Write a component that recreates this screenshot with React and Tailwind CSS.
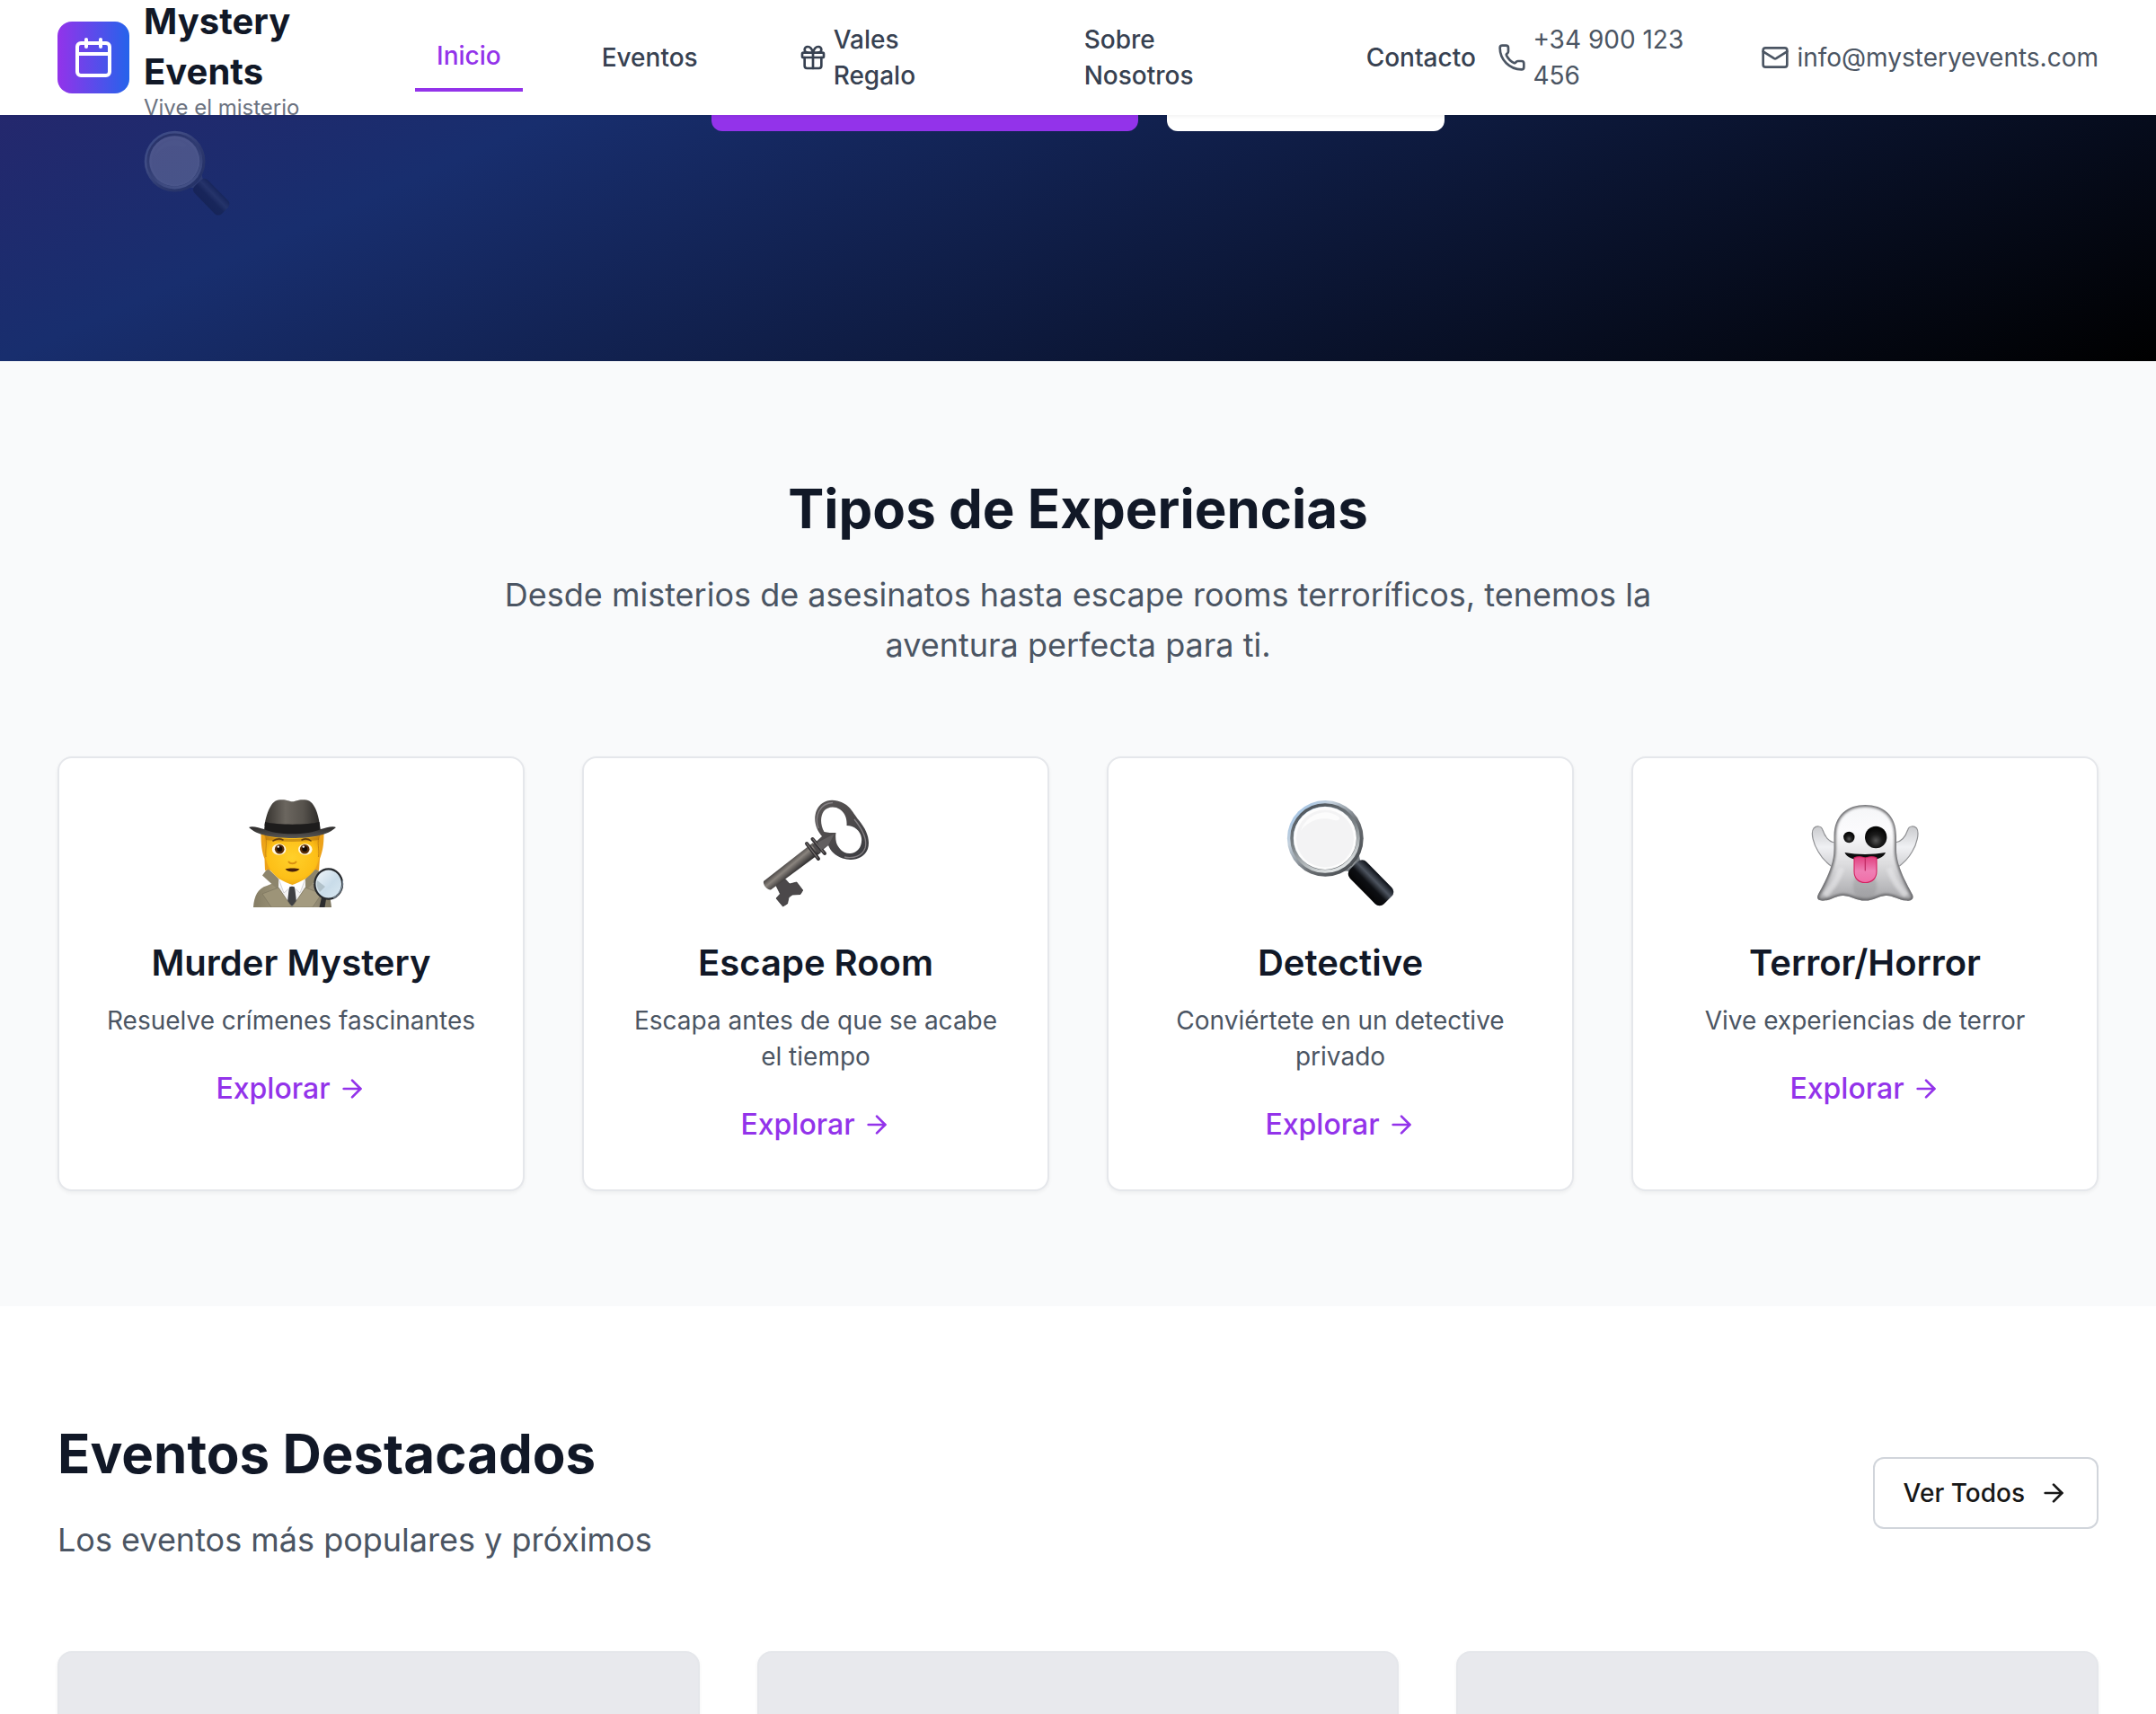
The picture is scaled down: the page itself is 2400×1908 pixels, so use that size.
import React from "react";
import { ArrowRight, Calendar, Gift, Mail, Phone } from "lucide-react";

function MagnifierArt({ className, id }) {
  return (
    <svg viewBox="0 0 120 120" className={className} aria-hidden="true">
      <defs>
        <linearGradient id={id + "rim"} x1="0" y1="0" x2="1" y2="1">
          <stop offset="0" stopColor="#8fbdec" />
          <stop offset="0.3" stopColor="#c3d0dc" />
          <stop offset="0.6" stopColor="#6b6f73" />
          <stop offset="1" stopColor="#3c4146" />
        </linearGradient>
        <linearGradient id={id + "edge"} x1="0.2" y1="0" x2="0.6" y2="1">
          <stop offset="0" stopColor="#4b5258" />
          <stop offset="0.5" stopColor="#7d8488" />
          <stop offset="1" stopColor="#dfe3e4" />
        </linearGradient>
        <linearGradient id={id + "grip"} x1="0" y1="0" x2="0" y2="1">
          <stop offset="0" stopColor="#0b0f16" />
          <stop offset="0.32" stopColor="#4d545f" />
          <stop offset="0.6" stopColor="#0d0f13" />
          <stop offset="1" stopColor="#050506" />
        </linearGradient>
      </defs>
      <path d="M62 80 C72 77 78 70 81 60 C81 65 82 68 84 71 L74 82 C71 80 67 79 62 80 Z" fill="#777d82" />
      <circle cx="43.3" cy="43.3" r="42.4" fill={"url(#" + id + "rim)"} />
      <circle cx="43" cy="43" r="37" fill="none" stroke={"url(#" + id + "edge)"} strokeWidth="3.5" />
      <circle cx="43" cy="43" r="35" fill="#fdfdfd" />
      <circle cx="43" cy="43.5" r="32" fill="#f3f3f4" />
      <path d="M16 35 C21 17 43 8 58 19 C61 22 58 24 53 23 C37 18 23 25 16 35 Z" fill="#ffffff" opacity="0.7" />
      <rect x="67" y="79.8" width="54" height="26" rx="7" transform="rotate(45.5 94 92.8)" fill={"url(#" + id + "grip)"} />
    </svg>
  );
}

function DetectiveArt({ className }) {
  return (
    <svg viewBox="0 0 120 120" className={className} aria-hidden="true">
      <defs>
        <linearGradient id="crown" x1="0" y1="0" x2="1" y2="0">
          <stop offset="0" stopColor="#35322e" />
          <stop offset="0.38" stopColor="#6b665f" />
          <stop offset="0.7" stopColor="#57534d" />
          <stop offset="1" stopColor="#2c2a28" />
        </linearGradient>
        <linearGradient id="brim" x1="0" y1="0" x2="0" y2="1">
          <stop offset="0" stopColor="#2b2a2a" />
          <stop offset="1" stopColor="#5a5855" />
        </linearGradient>
        <radialGradient id="skin" cx="0.5" cy="0.45" r="0.62">
          <stop offset="0" stopColor="#ffd02a" />
          <stop offset="0.7" stopColor="#fdbf17" />
          <stop offset="1" stopColor="#e69c10" />
        </radialGradient>
        <linearGradient id="coat" x1="0" y1="0" x2="1" y2="0">
          <stop offset="0" stopColor="#857d64" />
          <stop offset="0.4" stopColor="#a39a7e" />
          <stop offset="0.75" stopColor="#99907a" />
          <stop offset="1" stopColor="#7d765f" />
        </linearGradient>
        <linearGradient id="lens" x1="0" y1="0" x2="1" y2="1">
          <stop offset="0" stopColor="#f2f7fb" />
          <stop offset="0.55" stopColor="#c9dce9" />
          <stop offset="1" stopColor="#dceaf3" />
        </linearGradient>
      </defs>
      <path d="M18 120 C19 107 23 99 33 96 L45 91 L77 91 L92 96 C101 99 104 108 105 120 Z" fill="url(#coat)" />
      <path d="M34 76.5 L28 84.5 L46 101 L48 90 Z" fill="#8d856c" />
      <path d="M88 76.5 L95 84.5 L76 101 L74 90 Z" fill="#8d856c" />
      <path d="M46 88 L76 88 L76 98 L61 120 L46 98 Z" fill="#f3f3f4" />
      <path d="M46 88 L52 104 L61 96 L70 104 L76 88 Z" fill="#ffffff" stroke="#c7c7ca" strokeWidth="0.8" />
      <path d="M58.5 97 L63.5 97 L64.5 101 L66 114 L61 119 L56 114 L57.5 101 Z" fill="#3f4043" />
      <path d="M46 98 L28 105 L38 120 L61 120 Z" fill="#9d9478" stroke="#7d765f" strokeWidth="0.7" />
      <path d="M76 98 L94 105 L84 120 L61 120 Z" fill="#a49b80" stroke="#7d765f" strokeWidth="0.7" />
      <path d="M26.500 38 L96.500 38 C96.500 51 95 58 92 66 L91 79 L87 78 L83 80 L39 80 L35 78 L31 79 L30.500 66 C27.500 58 26.500 50 26.500 38 Z" fill="#eda21a" />
      <path d="M30.500 40 L92 40 C93 57 92 68 87 77 C81 87 70 92 61.500 95 C52 92 42 87 36 77 C31 68 29.500 57 30.500 40 Z" fill="url(#skin)" />
      <path d="M31 40 C34 48 31 54 32 64 M92 40 C88 48 92 54 90.500 64" fill="none" stroke="#c9850f" strokeWidth="1" />
      <path d="M32 41 C48 45 75 45 91 41 L91 45 C74 47.500 48 47.500 32 45 Z" fill="#a66a0b" opacity="0.5" />
      <path d="M40 46 C44 43.500 48 43.500 51 45 M72 45 C75 43.500 79 43.500 82 46" fill="none" stroke="#67400c" strokeWidth="1.600" strokeLinecap="round" />
      <ellipse cx="46.600" cy="55.500" rx="7.800" ry="6.200" fill="#fff8e1" />
      <ellipse cx="75.800" cy="55.500" rx="7.800" ry="6.200" fill="#fff8e1" />
      <circle cx="47.200" cy="55.300" r="5.300" fill="#5b2f08" />
      <circle cx="75.200" cy="55.300" r="5.300" fill="#5b2f08" />
      <circle cx="47.200" cy="55" r="3" fill="#140b04" />
      <circle cx="75.200" cy="55" r="3" fill="#140b04" />
      <circle cx="45.800" cy="52.600" r="1.200" fill="#ffffff" />
      <circle cx="73.800" cy="52.600" r="1.200" fill="#ffffff" />
      <path d="M57.500 69.500 C59 71.800 64 71.800 65.500 69.500" fill="none" stroke="#d98f10" strokeWidth="2" strokeLinecap="round" />
      <path d="M53.500 77.500 C58 76.300 65 76.300 69.500 77.500 C66 81.500 57 81.500 53.500 77.500 Z" fill="#47200b" />
      <path d="M30.500 29 C31.500 21 34 13 37 8 C40 2 44 0.300 50 0.300 C56 0.300 58 2.300 61.500 2.300 C65 2.300 67 0.300 73 0.300 C79 0.300 83 2 86 8 C89 13 91 21 92 29 C82 36 42 36 30.500 29 Z" fill="url(#crown)" />
      <path d="M31 25 C44 28.500 79 28.500 91.500 25 L93 35 C80 41 43 41 30 35 Z" fill="#1d1c1c" />
      <path d="M13 31 C17 29 25 32 30 33 C43 40 79 40 93 33 C98 32 106 29 110 31 C101 40 82 43 61.500 43 C41 43 22 40 13 31 Z" fill="url(#brim)" />
      <path d="M94 109 L99 111 L97.500 120 L91.500 120 Z" fill="#2b2c2e" />
      <ellipse cx="101.700" cy="94" rx="15.400" ry="16.600" fill="url(#lens)" stroke="#26292d" strokeWidth="2.200" />
      <path d="M89 90 L98 97 L92 103 C89 99 88 95 89 90 Z" fill="#a9b9c0" opacity="0.8" />
      <path d="M107 110 C115 105 118 98 117.500 90" fill="none" stroke="#7d8d9b" strokeWidth="1.200" />
    </svg>
  );
}

function KeyArt({ className }) {
  return (
    <svg viewBox="0 0 120 120" className={className} aria-hidden="true">
      <defs>
        <linearGradient id="iron" x1="0" y1="0" x2="1" y2="1">
          <stop offset="0" stopColor="#5b5858" />
          <stop offset="0.5" stopColor="#4d4a4b" />
          <stop offset="1" stopColor="#383a40" />
        </linearGradient>
        <linearGradient id="shaft" gradientUnits="userSpaceOnUse" x1="28" y1="68" x2="38" y2="80">
          <stop offset="0" stopColor="#3d3a3a" />
          <stop offset="0.45" stopColor="#8a847e" />
          <stop offset="1" stopColor="#353334" />
        </linearGradient>
      </defs>
      <path d="M15.5 95 L26 88.5 L31 94 L38.8 92 L45.7 101 L43 105.5 L34 106 L30 109 L28.5 116 L23.5 119 L16 110 L20.5 105 Z" fill="#4b484a" stroke="#343234" strokeWidth="0.8" />
      <path d="M57 48 L66 59 L10 100.5 C6 101 1 95 2 91 Z" fill="url(#shaft)" />
      <path fillRule="evenodd" d="M67 41 C60 33 57 22 61 12 C65 3 74 -1 84 1.5 C98 5 100 13 108 23 C117 34 121 45 118 55 C114 66 101 69 90 65.5 C81 62 77 58 74 51 L63 60 L56 51 Z M69.5 36 C65 28 65 19 69 13 C73 8 81 7 87 11 C93 15 95 22 94.5 29 C103 29 110 35 111 43 C112 52 107 59 99 60 C91 61 85 54 83 48 C82 44 82 40 82.5 37 C78 37 73 37 69.5 36 Z" fill="url(#iron)" />
      <path d="M63 32 C58 18 65 4 79 3.5 M103 22 C111 32 118 44 115 54 C112 63 102 66 92 64" fill="none" stroke="#858184" strokeWidth="1.3" />
      <path d="M50 49 L63 66 M56.5 44 L70 60" stroke="#343134" strokeWidth="4" strokeLinecap="round" />
      <path d="M50 49 L62 65 M57 44 L69 59" stroke="#7c7774" strokeWidth="1.2" strokeLinecap="round" />
      <path d="M62 48 L81 38 L74 51 L66 56 Z" fill="#625f60" />
    </svg>
  );
}

function GhostArt({ className }) {
  return (
    <svg viewBox="0 0 120 120" className={className} aria-hidden="true">
      <defs>
        <linearGradient id="sheet" x1="0" y1="0" x2="0" y2="1">
          <stop offset="0" stopColor="#f4f5f7" />
          <stop offset="0.3" stopColor="#fbfbfd" />
          <stop offset="0.6" stopColor="#dcdcde" />
          <stop offset="0.85" stopColor="#b4b4b7" />
          <stop offset="1" stopColor="#a2a2a4" />
        </linearGradient>
        <linearGradient id="arm" x1="0" y1="0" x2="0" y2="1">
          <stop offset="0" stopColor="#c9cacd" />
          <stop offset="0.5" stopColor="#f0f1f4" />
          <stop offset="1" stopColor="#cfcfd2" />
        </linearGradient>
        <radialGradient id="pupil" cx="0.5" cy="0.65" r="0.55">
          <stop offset="0" stopColor="#555555" />
          <stop offset="0.5" stopColor="#1c1c1c" />
          <stop offset="1" stopColor="#060606" />
        </radialGradient>
        <linearGradient id="tongue" x1="0" y1="0" x2="0" y2="1">
          <stop offset="0" stopColor="#e0407f" />
          <stop offset="0.55" stopColor="#ef7fb4" />
          <stop offset="1" stopColor="#f06fa8" />
        </linearGradient>
        <filter id="soft" x="-10%" y="-10%" width="120%" height="120%">
          <feGaussianBlur stdDeviation="1.6" />
        </filter>
        <clipPath id="bodyClip">
          <path d="M25.5 41 C25.5 17 41 6 60.3 6 C80 6 95 17 95 41 L95 56 C95 75 108 96 113 106 C115 111 111 113 106 112.6 C97 112 91 106.5 83 107 C75 107.500 70 112.600 60.300 112.600 C50 112.600 45 107.500 36 107 C29 106.500 23 112 14.500 112.600 C9 113 5.500 111 7.800 106 C13 96 25.500 75 25.500 56 Z" />
        </clipPath>
      </defs>
      <path d="M27 48 C19 47 15 40 13 34 C11.500 29 6 29 3 32 C-1 37 3 50 8 58 C13 67 19 72 25 76 Z" fill="url(#arm)" stroke="#909194" strokeWidth="1.2" />
      <path d="M93.600 48 C101.600 47 105.600 40 107.600 34 C109 29 114.600 29 117.600 32 C121 37 117.600 50 112.600 58 C107.600 67 101.600 72 95.600 76 Z" fill="url(#arm)" stroke="#909194" strokeWidth="1.2" />
      <g clipPath="url(#bodyClip)">
        <rect width="120" height="120" fill="url(#sheet)" />
        <ellipse cx="60" cy="96" rx="13" ry="17" fill="#8d8d90" opacity="0.35" filter="url(#soft)" />
        <path d="M34 76 C30 90 22 99 15 107 M87 76 C91 90 99 99 106 107" fill="none" stroke="#e6e6e8" strokeWidth="7" opacity="0.65" filter="url(#soft)" />
        <path d="M25.500 41 C25.500 17 41 6 60.300 6 C80 6 95 17 95 41 L95 56 C95 75 108 96 113 106 C115 111 111 113 106 112.600 C97 112 91 106.500 83 107 C75 107.500 70 112.600 60.300 112.600 C50 112.600 45 107.500 36 107 C29 106.500 23 112 14.500 112.600 C9 113 5.500 111 7.800 106 C13 96 25.500 75 25.500 56 Z" fill="none" stroke="#626265" strokeWidth="4" filter="url(#soft)" />
      </g>
      <circle cx="42.300" cy="42" r="6.200" fill="url(#pupil)" />
      <circle cx="72.200" cy="42" r="12.200" fill="url(#pupil)" />
      <path d="M37.500 59 C51 61.500 69 61.500 83 59 C81 64.500 73 68 60.300 68 C48 68 39.500 64.500 37.500 59 Z" fill="#0d0d0e" />
      <path d="M48 65 C51 63 57 63.500 60.300 65 C64 63.500 70 63 73 65 L73 80 C73 88 67.500 92.500 60.300 92.500 C53 92.500 48 88 48 80 Z" fill="url(#tongue)" stroke="#d3205f" strokeWidth="1.100" />
      <path d="M60.300 66 L60.300 79" stroke="#bf2a62" strokeWidth="1.200" strokeLinecap="round" />
    </svg>
  );
}

function Header() {
  return (
    <header className="relative z-10 flex h-32 shrink-0 items-center bg-white px-16 shadow-[0_2px_4px_0_rgba(0,0,0,0.05)]">
      <a className="flex w-[398px] shrink-0 items-center gap-4">
        <div className="flex size-20 shrink-0 items-center justify-center rounded-2xl bg-[linear-gradient(to_right,#9333ea,#2563eb)]">
          <Calendar className="size-12 text-white" />
        </div>
        <div className="-mb-1 w-[180px]">
          <div className="text-[40px] leading-[56px] font-bold text-[#111827]">Mystery Events</div>
          <div className="-mt-1 text-2xl leading-8 whitespace-nowrap text-[#6b7280]">Vive el misterio</div>
        </div>
      </a>
      <nav className="flex shrink-0 items-center gap-16 text-[28px] leading-10 font-medium text-[#374151]">
        <a className="border-b-4 border-[#9333ea] px-6 py-4 text-[#9333ea]">Inicio</a>
        <a className="px-6 py-4">Eventos</a>
        <a className="flex w-[254px] items-center gap-[7px] px-6 py-4">
          <Gift className="size-8 shrink-0" />
          <span>
            Vales
            <br />
            Regalo
          </span>
        </a>
        <a className="w-[250px] px-6 py-4">
          Sobre
          <br />
          Nosotros
        </a>
        <a className="px-6 py-4">Contacto</a>
      </nav>
      <div className="ml-auto flex shrink-0 items-center gap-12 text-[28px] leading-10 text-[#4b5563]">
        <div className="flex items-center gap-[7px]">
          <Phone className="size-8 shrink-0" />
          <span className="w-[206px]">
            +34 900 123
            <br />
            456
          </span>
        </div>
        <div className="flex items-center gap-2">
          <Mail className="size-8 shrink-0" />
          <span>info@mysteryevents.com</span>
        </div>
      </div>
    </header>
  );
}

function Hero() {
  return (
    <section className="flex h-[274px] shrink-0 flex-col justify-end overflow-hidden">
      <div className="relative flex h-[1064px] shrink-0 flex-col justify-end bg-[linear-gradient(to_bottom_right,#46166c,#182e6e,#000000)] pb-64">
        <div className="flex justify-center gap-8">
          <div className="h-22 w-[475px] rounded-xl bg-[#9333ea]" />
          <div className="h-22 w-[309px] rounded-xl bg-white" />
        </div>
        <MagnifierArt id="hero" className="absolute bottom-[161px] left-[160px] size-24 opacity-20" />
      </div>
    </section>
  );
}

const TYPES = [
  { Art: DetectiveArt, title: "Murder Mystery", text: "Resuelve crímenes fascinantes" },
  { Art: KeyArt, title: "Escape Room", text: "Escapa antes de que se acabe el tiempo" },
  { Art: MagnifierArt, title: "Detective", text: "Conviértete en un detective privado" },
  { Art: GhostArt, title: "Terror/Horror", text: "Vive experiencias de terror" },
];

function Experiences() {
  return (
    <section className="shrink-0 bg-[#f9fafb] px-16 py-32">
      <div className="flex flex-col items-center text-center">
        <h2 className="mb-8 text-[60px] leading-[72px] font-bold text-[#111827]">Tipos de Experiencias</h2>
        <p className="mb-24 w-[1344px] text-4xl leading-[56px] text-[#4b5563]">
          Desde misterios de asesinatos hasta escape rooms terroríficos, tenemos la aventura perfecta para ti.
        </p>
      </div>
      <div className="grid grid-cols-4 gap-16">
        {TYPES.map(({ Art, title, text }) => (
          <div
            key={title}
            className="flex flex-col items-center rounded-2xl border-2 border-[#e5e7eb] bg-white p-12 text-center shadow-[0_2px_4px_0_rgba(0,0,0,0.05)]"
          >
            <Art id="card" className="-mt-0.5 mb-8.5 size-30" />
            <h3 className="mb-4 text-[40px] leading-[56px] font-semibold text-[#111827]">{title}</h3>
            <p className="mb-8 text-[28px] leading-10 text-[#4b5563]">{text}</p>
            <a className="flex items-center gap-2 text-[32px] leading-[48px] font-medium text-[#9333ea]">
              Explorar
              <ArrowRight className="size-8" />
            </a>
          </div>
        ))}
      </div>
    </section>
  );
}

function Featured() {
  return (
    <section className="shrink-0 bg-white px-16 pt-32">
      <div className="mb-24 flex items-center justify-between">
        <div>
          <h2 className="mb-8 text-[60px] leading-[72px] font-bold text-[#111827]">Eventos Destacados</h2>
          <p className="text-4xl leading-[56px] text-[#4b5563]">Los eventos más populares y próximos</p>
        </div>
        <button className="flex h-20 items-center gap-4 rounded-xl border-2 border-[#d1d5db] bg-white px-8 text-[28px] leading-10 font-medium text-[#171717]">
          Ver Todos
          <ArrowRight className="size-8" />
        </button>
      </div>
      <div className="grid grid-cols-3 gap-16">
        {[0, 1, 2].map((n) => (
          <div
            key={n}
            className="h-96 overflow-hidden rounded-2xl border-2 border-[#e5e7eb] bg-[#e8e9ed] shadow-[0_2px_4px_0_rgba(0,0,0,0.05)]"
          />
        ))}
      </div>
    </section>
  );
}

export default function App() {
  return (
    <div className="flex h-[1908px] w-[2400px] flex-col overflow-hidden bg-white font-['Inter',sans-serif] antialiased">
      <Header />
      <Hero />
      <Experiences />
      <Featured />
    </div>
  );
}
